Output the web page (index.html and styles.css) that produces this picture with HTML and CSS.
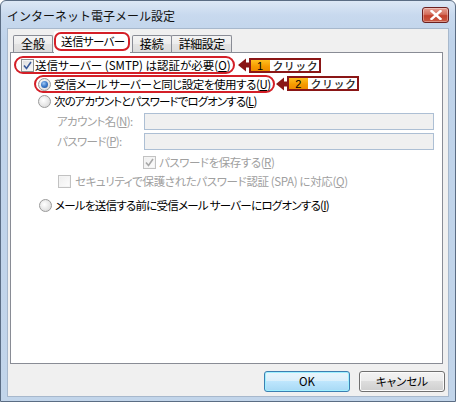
FILE: index.html
```html
<!DOCTYPE html>
<html lang="ja">
<head>
<meta charset="utf-8">
<link rel="stylesheet" href="styles.css">
</head>
<body>
<div class="window">
  <div class="titlebar">
    <span class="title">インターネット電子メール設定</span>
    <div class="close">
      <svg width="12" height="10" viewBox="0 0 12 10"><path d="M1.5 1 L10.5 9 M10.5 1 L1.5 9" stroke="#fff" stroke-width="2.4" stroke-linecap="square"/></svg>
    </div>
  </div>
  <div class="client">
    <div class="tabs">
      <div class="tab">全般</div>
      <div class="tab sel"><span class="tabmark">送信サーバー</span></div>
      <div class="tab">接続</div>
      <div class="tab t4">詳細設定</div>
    </div>
    <div class="panel">
      <div class="row r1">
        <span class="mark mark1"><span class="cb checked"><svg width="9" height="9" viewBox="0 0 9 9"><path d="M1 4.5 L3.5 7.5 L8 1" fill="none" stroke="#3a5a9a" stroke-width="1.6"/></svg></span><span class="lbl">送信サーバー&nbsp;(SMTP)&nbsp;は認証が必要(<u>O</u>)</span></span>
        <span class="callout c1"><svg class="arrow" width="12" height="14" viewBox="0 0 12 14"><polygon points="0,7 8,0.5 8,4.5 12,4.5 12,9.5 8,9.5 8,13.5" fill="#8a1616"/></svg><span class="cbox"><span class="num">1</span><span class="ctext">クリック</span></span></span>
      </div>
      <div class="row r2">
        <span class="mark mark2"><span class="rb on"></span><span class="lbl">受信メール&nbsp;サーバーと同じ設定を使用する(<u>U</u>)</span></span>
        <span class="callout c2"><svg class="arrow" width="12" height="14" viewBox="0 0 12 14"><polygon points="0,7 8,0.5 8,4.5 12,4.5 12,9.5 8,9.5 8,13.5" fill="#8a1616"/></svg><span class="cbox"><span class="num">2</span><span class="ctext">クリック</span></span></span>
      </div>
      <div class="row r3"><span class="rb"></span><span class="lbl">次のアカウントとパスワードでログオンする(<u>L</u>)</span></div>
      <div class="row field f1"><span class="flabel">アカウント名(<u>N</u>):</span><span class="input"></span></div>
      <div class="row field f2"><span class="flabel">パスワード(<u>P</u>):</span><span class="input"></span></div>
      <div class="row r-save"><span class="cb checked dis"><svg width="9" height="9" viewBox="0 0 9 9"><path d="M1 4.5 L3.5 7.5 L8 1" fill="none" stroke="#a8a8a8" stroke-width="1.6"/></svg></span><span class="lbl dlbl">パスワードを保存する(<u>R</u>)</span></div>
      <div class="row r-spa"><span class="cb dis"></span><span class="lbl dlbl">セキュリティで保護されたパスワード認証&nbsp;(SPA)&nbsp;に対応(<u>Q</u>)</span></div>
      <div class="row r-last"><span class="rb"></span><span class="lbl">メールを送信する前に受信メール&nbsp;サーバーにログオンする(<u>I</u>)</span></div>
    </div>
    <div class="buttons">
      <button class="btn default">OK</button>
      <button class="btn">キャンセル</button>
    </div>
  </div>
</div>
</body>
</html>
```

FILE: styles.css
```css
* { box-sizing: border-box; }
html, body { margin: 0; padding: 0; background: #fff; }
body {
  font-family: "Noto Sans CJK JP", "Noto Sans", sans-serif;
  font-size: 12px;
  color: #000;
}
u { text-decoration: underline; text-underline-offset: 1px; }

.window {
  width: 456px;
  height: 402px;
  border: 1px solid #5b6d84;
  border-radius: 6px 6px 0 0;
  background: linear-gradient(#dde8f5 0, #c8d9ee 14px, #bfd3ea 40px, #c2d5ea 100%);
  display: flex;
  flex-direction: column;
  overflow: hidden;
}

.titlebar {
  height: 27px;
  display: flex;
  align-items: center;
  justify-content: space-between;
  padding: 0 6px 0 6px;
  flex: none;
}
.title {
  font-size: 12px;
  color: #111;
  margin-top: 1px;
}
.close {
  width: 27px;
  height: 16px;
  border: 1px solid #6b2020;
  border-radius: 3px;
  background: linear-gradient(#e6a094 0, #d46e5c 45%, #c3402c 55%, #c95a44 100%);
  display: flex;
  align-items: center;
  justify-content: center;
  box-shadow: inset 0 0 0 1px rgba(255,255,255,0.35);
}

.client {
  flex: 1;
  margin: 0 6px 4px 6px;
  background: #f0f0f0;
  border: 1px solid #a7b8cc;
  display: flex;
  flex-direction: column;
}

.tabs {
  height: 23px;
  display: flex;
  align-items: flex-end;
  padding-left: 5px;
  position: relative;
  z-index: 2;
  flex: none;
}
.tab {
  height: 17px;
  border: 1px solid #898c95;
  border-bottom: none;
  border-radius: 2px 2px 0 0;
  background: linear-gradient(#f4f4f4, #ececec 50%, #e3e3e3 50%, #dcdcdc);
  padding: 0 7px;
  line-height: 15px;
  margin-right: -1px;
  white-space: nowrap;
}
.tab.t4 { letter-spacing: -0.5px; padding: 0 6px 0 7px; }
.tab.sel {
  height: 22px;
  margin: 0 2px -1px 2px;
  padding: 1px 0 0 0;
  border: none;
  background: #fff;
}
.tabmark {
  display: block;
  height: 19px;
  border: 2px solid #d41f27;
  border-radius: 7px;
  padding: 0 3px 0 5px;
  line-height: 15px;
  font-size: 11.5px;
  font-feature-settings: "palt";
  letter-spacing: -0.6px;
}

.panel {
  height: 312px;
  margin: 0 5px 0 2px;
  border: 1px solid #898c95;
  background: #fff;
  position: relative;
  z-index: 1;
  flex: none;
  display: flex;
  flex-direction: column;
}

.row {
  display: flex;
  align-items: center;
  height: 17px;
  line-height: 17px;
  white-space: nowrap;
}
.lbl { font-size: 11.5px; font-feature-settings: "palt"; letter-spacing: 0; }
.dlbl { color: #a0a0a0; }

.r1 { margin-top: 3px; height: 18px; }
.mark {
  display: flex;
  align-items: center;
  height: 18px;
  border: 2px solid #d41f27;
  border-radius: 9px;
}
.mark1 { margin-left: 3px; padding: 0 2px 0 5px; }
.mark1 .cb { margin-right: 1px; }
.r2 { margin-top: 1px; height: 18px; }
.mark2 { margin-left: 23px; padding: 0 2px 0 2px; }
.mark2 .rb { margin-right: 3px; }
.mark2 .lbl { letter-spacing: -0.45px; }

.callout { display: flex; align-items: center; }
.c1 { margin-left: 3px; }
.c2 { margin-left: 1px; margin-top: -1px; }
.arrow { display: block; margin-right: -1px; }
.cbox {
  display: flex;
  height: 15px;
  border: 2px solid #8a1616;
  background: #fff;
}
.num {
  flex: none;
  width: 19px;
  background: linear-gradient(#ffc020, #f59a00 60%, #ef8c00);
  text-align: center;
  font-size: 11px;
  line-height: 11px;
  font-family: "Liberation Sans", sans-serif;
  padding-top: 1px;
}
.ctext {
  flex: none;
  padding: 0 0 0 3px;
  font-size: 10.5px;
  line-height: 11px;
  letter-spacing: 1px;
  color: #111;
  -webkit-text-stroke: 0.2px #111;
}

.r3 { padding-left: 27px; margin-top: 0; }
.r3 .rb { margin-right: 3px; }
.r3 .lbl { letter-spacing: -0.9px; }

.field { margin-top: 3px; }
.flabel { width: 133px; padding-left: 46px; color: #a0a0a0; font-size: 11.5px; font-feature-settings: "palt"; letter-spacing: -0.6px; }
.input {
  width: 290px;
  height: 17px;
  border: 1px solid #adbfd4;
  background: #f0f0f0;
}
.f2 { margin-top: 3px; }

.r-save { margin-top: 4px; padding-left: 132px; }
.r-save .cb { margin-right: 3px; }
.r-save .lbl { letter-spacing: -0.45px; }
.r-spa { margin-top: 2px; padding-left: 47px; }
.r-spa .cb { margin-right: 4px; }
.r-spa .lbl { letter-spacing: -0.37px; }
.r-last { margin-top: 7px; padding-left: 28px; }
.r-last .rb { margin-right: 3px; }
.r-last .lbl { letter-spacing: -0.75px; }

.cb {
  width: 13px;
  height: 13px;
  flex: none;
  border: 1px solid #8e8f8f;
  background: linear-gradient(135deg, #dcdcdc, #fbfbfb);
  box-shadow: inset 0 0 0 1px #f4f4f4;
  display: flex;
  align-items: center;
  justify-content: center;
}
.cb.dis { border-color: #c2c2c2; background: linear-gradient(135deg, #eeeeee, #fdfdfd); }
.rb {
  width: 13px;
  height: 13px;
  flex: none;
  border-radius: 50%;
  border: 1px solid #9a9a9a;
  background: radial-gradient(circle at 40% 40%, #ffffff 0, #e4e4e4 60%, #cfcfcf 100%);
  position: relative;
}
.rb.on::after {
  content: "";
  position: absolute;
  left: 2px;
  top: 2px;
  width: 7px;
  height: 7px;
  border-radius: 50%;
  background: radial-gradient(circle at 40% 35%, #9ec8f5 0, #3a78c8 50%, #1c4f9a 100%);
}

.buttons {
  display: flex;
  justify-content: flex-end;
  gap: 9px;
  margin-top: 7px;
  padding-right: 3px;
}
.btn {
  width: 86px;
  height: 21px;
  font-family: "Noto Sans CJK JP", sans-serif;
  font-size: 11.5px;
  line-height: 17px;
  padding: 0;
  border: 1px solid #707070;
  border-radius: 3px;
  background: linear-gradient(#f3f3f3, #ebebeb 50%, #dddddd 50%, #cfcfcf);
  box-shadow: inset 0 0 0 1px #fbfbfb;
  color: #000;
  font-feature-settings: "palt";
}
.btn.default {
  border-color: #3c7fb1;
  background: linear-gradient(#e9f5fc, #d9effb 50%, #bee6fd 50%, #a7d9f5);
  box-shadow: inset 0 0 0 1px #9ff0ff;
}
```
